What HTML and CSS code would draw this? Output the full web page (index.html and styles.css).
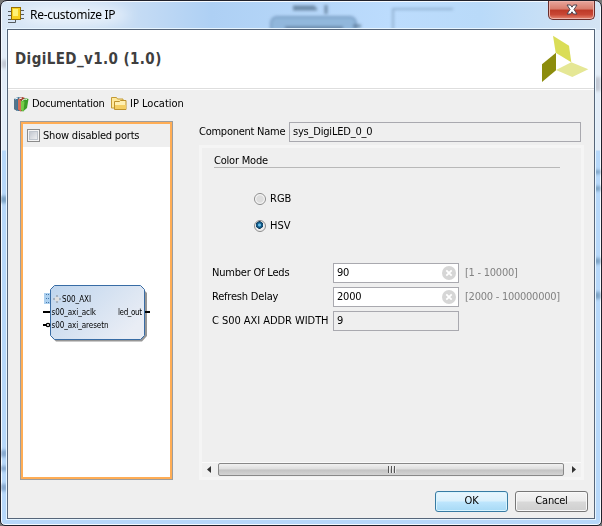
FILE: index.html
```
<!DOCTYPE html>
<html lang="en">
<head>
<meta charset="utf-8">
<title>Re-customize IP</title>
<link rel="stylesheet" href="styles.css">
</head>
<body>
<main class="window">
  <svg class="glass" width="602" height="526" aria-hidden="true">
    <defs>
      <filter id="soft" x="-20%" y="-20%" width="140%" height="140%"><feGaussianBlur stdDeviation="1.6"/></filter>
      <filter id="haze" x="-50%" y="-50%" width="200%" height="200%"><feGaussianBlur stdDeviation="7"/></filter>
    </defs>
    <g filter="url(#soft)">
      <rect x="271" y="17" width="85" height="26" rx="6" fill="#91b7dc" stroke="#7b9fc4" stroke-width="2"/>
      <path d="M285 28h58M353 26h8M293 9h24M326 5v9M293 7h22" stroke="#47617d" stroke-width="3" opacity=".65"/>
      <path d="M393 40V9h60" fill="none" stroke="#7898b8" stroke-width="2" opacity=".6"/>
      <path d="M4 196v7M597 170v4M597 186v5M597 258v6M597 292v7" stroke="#456f91" stroke-width="7" opacity=".5"/>
      <path d="M4 450v7M4 466v5M4 484v7" stroke="#587aa5" stroke-width="7" opacity=".5"/>
      <path d="M5 60v8M597 77v14" stroke="#94949d" stroke-width="7" opacity=".4"/>
    </g>
    <ellipse cx="75" cy="15" rx="55" ry="10" fill="#fff" opacity=".6" filter="url(#haze)"/>
  </svg>
  <header class="titlebar">
    <svg class="chip" width="16" height="17" viewBox="0 0 16 17">
      <path d="M0 4.500h4M0 8.500h4M0 12.500h4M12 3.500h4M12 7.500h4M12 11.500h4M0 15.500h7.500v-3" fill="none" stroke="#555b5f"/>
      <rect x="3.500" y=".5" width="9" height="12" fill="#f8d020" stroke="#987000"/>
      <path d="M5 2h5v7H5z" fill="#fff276"/>
    </svg>
    <span class="caption">Re-customize IP</span>
    <button class="close" aria-label="Close">
      <svg width="14" height="12" viewBox="0 0 14 12"><path d="M2 1h3.500L7 3.200 8.500 1H12L9 5.500l3 4.500H8.500L7 7.800 5.500 10H2l3-4.500z" fill="#fff" stroke="#4d4652"/></svg>
    </button>
  </header>
  <section class="client">
    <div class="banner">
      <h1>DigiLED_v1.0 (1.0)</h1>
      <svg class="logo" width="48" height="48" viewBox="541 35 48 48">
        <path d="M553 35.700l16 10 2.300 16.600L555.700 52.700z" fill="#dadd57"/>
        <path d="M542 64.300l14-11.600v17.600L542 82z" fill="#8c8c0c"/>
        <path d="M556 70l15.300-7.700 17 7L572.300 77z" fill="#e5e795"/>
      </svg>
    </div>
    <nav class="toolbar">
      <svg class="books" width="16" height="16" viewBox="0 0 16 16">
        <path d="M1 3l4-2 4 1v13H5l-4-2z" fill="#3c7598"/><path d="M1 3l3 1.500V15l-3-2z" fill="#54748a"/>
        <path d="M5 3l4-2 3 1-1 12-3 1.500-3-2z" fill="#a43a2a"/><path d="M5 3l3 1.500v11l-3-2z" fill="#d46e56"/>
        <path d="M8 5l4-3 3.500 1L14 12l-4 3.500-2-1z" fill="#3c9e28"/><path d="M8 5l3.500.5-1 10L8 14z" fill="#75cc48"/>
        <path d="M2 3l3-1M6 3l3-1M9 4.500l3-1.500 2 .5" stroke="#fff" stroke-width=".9" fill="none"/>
      </svg>
      <span class="docs">Documentation</span>
      <svg class="folder" width="16" height="15" viewBox="0 0 16 15">
        <path d="M.5 12V1.500h5l1 1.500H12v9z" fill="#ffe99b" stroke="#c39a35"/>
        <path d="M3.500 13.500v-8h5l1-1H15v9z" fill="#fff0b2" stroke="#be922c"/>
        <path d="M4 9h11v4H4z" fill="#f4ce62"/>
      </svg>
      <span class="location">IP Location</span>
    </nav>
    <div class="workspace">
      <aside class="preview">
        <label class="ports"><i class="check"></i><span>Show disabled ports</span></label>
        <svg class="diagram" width="147" height="330" viewBox="23 147 147 330">
          <defs><linearGradient id="block" x2="1" y2=".6"><stop stop-color="#bfd5ed"/><stop offset="1" stop-color="#e9edf5"/></linearGradient></defs>
          <path d="M57 288h85l5 5v43l-5 5.500H56l-4-4z" fill="#969696"/>
          <path d="M44 293h6v11h-6z" fill="#add0ef"/>
          <path d="M46 294.500h4M46 298.500h4M46 302.500h4" stroke="#467aac" stroke-dasharray="1 1"/>
          <path d="M54.500 285.500h86l4 4v46l-4 4h-86l-4-4v-46z" fill="url(#block)" stroke="#386ca5"/>
          <path d="M53 299h3M58 299h3M57 295v2M57 301v2" stroke="#858b91"/><path d="M55 297h4v4h-4z" fill="#dedede"/>
          <path d="M43 312h7M145 312h5M43 325h4" stroke="#000" stroke-width="2"/>
          <circle cx="48" cy="325" r="1.700" fill="#fff" stroke="#000" stroke-width="1.300"/>
          <g class="pins">
            <text x="62" y="302" textLength="29">S00_AXI</text>
            <text x="51.500" y="315" textLength="44.500">s00_axi_aclk</text>
            <text x="51.500" y="328" textLength="57">s00_axi_aresetn</text>
            <text x="118" y="315" textLength="24">led_out</text>
          </g>
        </svg>
      </aside>
      <div class="config">
        <div class="namerow"><label>Component Name</label><div class="field">sys_DigiLED_0_0</div></div>
        <div class="pane">
          <div class="options">
            <h2><span>Color Mode</span></h2>
            <label class="choice"><i class="radio"></i><span>RGB</span></label>
            <label class="choice"><i class="radio on"></i><span>HSV</span></label>
            <div class="params">
              <label>Number Of Leds</label>
              <div class="field edit">90<svg class="clear" width="14" height="14"><circle cx="7" cy="7" r="7"/><path d="M4.300 4.300l5.400 5.400M9.700 4.300L4.300 9.700"/></svg></div>
              <span class="range">[1 - 10000]</span>
              <label>Refresh Delay</label>
              <div class="field edit">2000<svg class="clear" width="14" height="14"><circle cx="7" cy="7" r="7"/><path d="M4.300 4.300l5.400 5.400M9.700 4.300L4.300 9.700"/></svg></div>
              <span class="range">[2000 - 100000000]</span>
              <label class="wide">C S00 AXI ADDR WIDTH</label>
              <div class="field">9</div>
            </div>
          </div>
          <div class="scroll">
            <svg width="16" height="13"><path d="M9 3v7L5 6.500z" fill="#333"/></svg>
            <div class="thumb"><i></i><i></i><i></i></div>
            <svg width="17" height="13"><path d="M8 3v7l4-3.500z" fill="#333"/></svg>
          </div>
        </div>
      </div>
    </div>
    <footer class="actions"><button class="btn ok">OK</button><button class="btn cancel">Cancel</button></footer>
  </section>
</main>
</body>
</html>
```
FILE: styles.css
```
* { box-sizing: border-box; }
body { margin: 0; background: #777; font: 11px/14px "DejaVu Sans Condensed", "DejaVu Sans", sans-serif; font-stretch: condensed; letter-spacing: -.2px; color: #000; overflow: hidden; }
h1, h2 { margin: 0; font-weight: normal; }
svg { display: block; flex: none; }
span, label { white-space: nowrap; }
.window { position: relative; width: 602px; height: 526px; padding: 0 6px 6px; border: 1px solid #20212b; border-radius: 7px 7px 5px 5px; overflow: hidden; background: linear-gradient(#e3edf8 0 149px, #b7d8fa 150px); box-shadow: inset 0 0 0 1px #f5faff; }
.window::before { content: ""; position: absolute; inset: 1px 1px auto; height: 28px; background: linear-gradient(90deg, #d9e7f6, #c6dcf4 22%, #aed0f4 35%, #bcdcfd 65%, #b9daf9 80%, #d4e4f3); }
.glass { position: absolute; left: -1px; top: -1px; }
.titlebar { position: relative; height: 28px; display: flex; padding-left: 1px; }
.chip { margin-top: 6px; }
.caption { margin: 5px 0 0 6px; font: 12px/17px "Noto Sans", sans-serif; letter-spacing: -.3px; }
.close { margin: 0 0 0 auto; width: 47px; height: 19px; padding: 3px 0 0; display: flex; justify-content: center; border: 1px solid #682d2b; border-top: 0; border-radius: 0 0 5px 5px; background: linear-gradient(#e8a69c, #d87c6c 45%, #bd3927 50%, #c84735 75%, #e58873); box-shadow: inset 0 0 0 1px #edb1a8; }
.client { position: relative; width: 588px; height: 490px; border: 1px solid #566579; background: #efefef; box-shadow: 0 0 0 1px #e7f5ff; }
.banner { height: 60px; background: #fff; border-bottom: 1px solid #fff; box-shadow: inset 0 -1px #dedede; display: flex; justify-content: space-between; padding: 5px 5px 0 7px; }
h1 { margin-top: 14px; font: bold 15px/20px "DejaVu Sans Condensed", "DejaVu Sans", sans-serif; font-stretch: condensed; letter-spacing: .4px; color: #3f3f3f; }
.toolbar { height: 31px; padding: 1px 0 5px 5px; display: flex; align-items: center; }
.docs { margin-left: 3px; width: 79px; letter-spacing: -.3px; }
.location { margin-left: 3px; letter-spacing: 0; }
.workspace { display: flex; height: 360px; padding-left: 12px; }
.preview { width: 153px; height: 359px; border: 1px solid #9d9d9d; box-shadow: inset 0 0 0 2px #ffad55; padding: 2px; background: #fff; }
.ports { height: 23px; background: #efefef; display: flex; align-items: center; padding-left: 4px; }
.ports span { margin-left: 3px; }
.check { width: 13px; height: 13px; border: 1px solid #8b8b8b; background: linear-gradient(135deg, #b7bdc7, #fafafa); box-shadow: inset 0 0 0 1px #f5f5f5, inset 0 0 0 2px #bfc5cd; }
.pins { font: 8px "DejaVu Sans Condensed", "DejaVu Sans", sans-serif; font-stretch: condensed; letter-spacing: 0; }
.config { margin-left: 26px; width: 385px; }
.namerow { display: flex; height: 24px; padding: 1px 3px 0 0; }
.namerow label { width: 90px; padding-top: 3px; letter-spacing: -.25px; }
.field { height: 20px; border: 1px solid #a9a9af; padding: 2px 3px; flex: 1; }
.edit { background: #fff; display: flex; justify-content: space-between; }
.clear { fill: #d6d6d6; margin: 0 -1px 0 0; stroke: none; }
.clear path { stroke: #fff; stroke-width: 1.800; }
.pane { height: 335px; border: 3px solid #f5f5f5; }
.options { height: 314px; padding: 6px 20px 0 10px; }
h2 { width: 346px; height: 14px; margin: 0 0 23px 2px; font-size: 11px; line-height: 13px; border-bottom: 1px solid #b8b8b8; }
.choice { display: flex; height: 16px; align-items: center; margin: 0 0 11px 42px; }
.choice span { margin-left: 4px; letter-spacing: 0; }
.radio { width: 12px; height: 12px; border: 1px solid #8b8b8b; border-radius: 50%; background: radial-gradient(#ddd 45%, #fff 70%); }
.radio.on { background: radial-gradient(circle at 45% 40%, #68c0e9 0 1px, #135784 2px 3px, #14344d 3.500px, #eee 4px); }
.params { display: grid; grid-template-columns: 121px 126px 1fr; grid-auto-rows: 20px; row-gap: 4px; padding-top: 18px; }
.params > label, .range { padding-top: 3px; }
.params > .wide { letter-spacing: -.05px; }
.range { margin-left: 6px; color: #828282; letter-spacing: -.25px; }
.scroll { height: 15px; display: flex; background: #f0f0f0; border-top: 1px solid #fafafa; }
.thumb { flex: 1; height: 13px; border: 1px solid #888; border-radius: 2px; background: linear-gradient(#f1f1f1, #ddd 48%, #c2c2c2 52%, #d4d4d4); display: flex; justify-content: center; gap: 2px; padding-top: 2px; }
.thumb i { width: 1px; height: 7px; background: #555; box-shadow: 1px 0 #eee; }
.actions { display: flex; justify-content: flex-end; gap: 7px; padding: 10px 6px 0 0; }
.btn { width: 73px; height: 21px; padding: 0 0 1px; border: 1px solid #777; border-radius: 3px; font: inherit; letter-spacing: -.2px; background: linear-gradient(#f4f4f4, #ebebeb 48%, #d9d9d9 52%, #cfcfcf); box-shadow: inset 0 0 0 1px #f9f9f9; }
.ok { border-color: #387ba3; background: linear-gradient(#eaf6fd, #d9f0fc 48%, #bee6fd 52%, #a7d9f5); box-shadow: inset 0 0 0 1px #d9f5ff; }
```
